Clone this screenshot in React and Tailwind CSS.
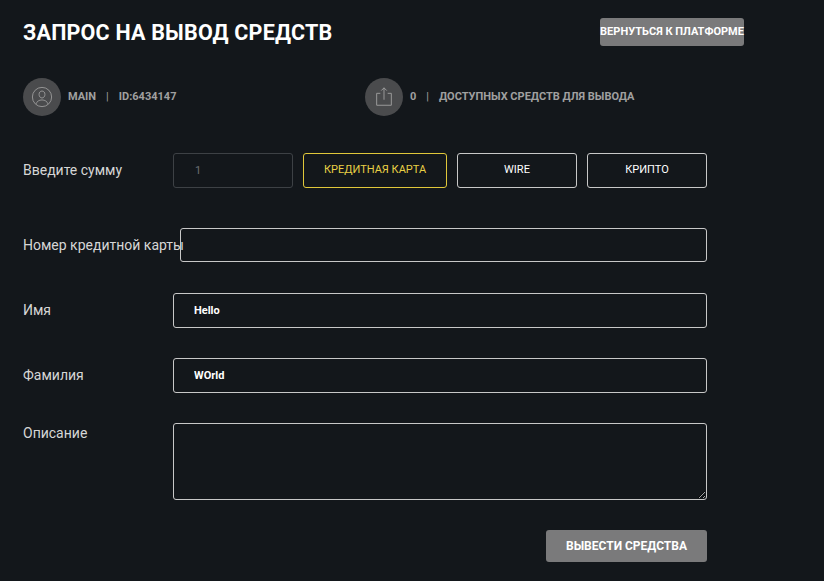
import React from 'react';

const Label = ({ children }) => <div className="w-[150px] shrink-0 text-[14px] text-[#d6d6d6]">{children}</div>;

const App = () => {
  return (
    <div className="min-h-[581px] bg-[#13171b] text-white px-[23px] pt-[18px]" style={{ fontFamily: 'Roboto, "Liberation Sans", sans-serif' }}>
      <div className="flex items-start justify-between pr-[57px]">
        <h1 className="text-[21.5px] leading-[28px] font-bold mt-[1px] tracking-[0.2px]">ЗАПРОС НА ВЫВОД СРЕДСТВ</h1>
        <button className="shrink-0 whitespace-nowrap h-[28px] w-[144px] rounded-[3px] bg-[#7a7a7b] text-[11px] font-bold text-white">ВЕРНУТЬСЯ К ПЛАТФОРМЕ</button>
      </div>

      <div className="mt-[31px] flex items-center text-[11px] font-bold text-[#a0a0a0]">
        <div className="flex items-center w-[342px]">
          <div className="w-[38px] h-[38px] rounded-full bg-[#4a4b4d] flex items-center justify-center">
            <svg width="22" height="22" viewBox="0 0 24 24" fill="none" stroke="#9a9a9a" strokeWidth="1">
              <circle cx="12" cy="12" r="10.5" />
              <path d="M12 5.5c-2 0-3.2 1.6-3.2 3.6 0 2.3 1.4 4 3.2 4s3.2-1.7 3.2-4c0-2-1.2-3.6-3.2-3.6z" />
              <path d="M5.5 19.5c.8-2.6 3.3-4.3 6.5-4.3s5.7 1.7 6.5 4.3" />
            </svg>
          </div>
          <span className="ml-[7px]">MAIN</span>
          <span className="mx-[10px] font-normal">|</span>
          <span>ID:6434147</span>
        </div>
        <div className="flex items-center">
          <div className="w-[38px] h-[38px] rounded-full bg-[#4a4b4d] flex items-center justify-center">
            <svg width="22" height="22" viewBox="0 0 24 24" fill="none" stroke="#a0a0a0" strokeWidth="1">
              <path d="M8 8H4v13h16V8h-4" />
              <path d="M12 15V2M9 5l3-3 3 3" />
            </svg>
          </div>
          <span className="ml-[7px]">0</span>
          <span className="mx-[10px] font-normal">|</span>
          <span>ДОСТУПНЫХ СРЕДСТВ ДЛЯ ВЫВОДА</span>
        </div>
      </div>

      <div className="mt-[37px] w-[684px] flex flex-col">
        <div className="flex items-center h-[35px]">
          <Label>Введите сумму</Label>
          <input defaultValue="1" className="w-[120px] h-[35px] rounded-[3px] border border-[#3d4145] bg-transparent px-[21px] text-[11px] text-[#6b6e72] outline-none" />
          <button className="ml-[10px] w-[144px] h-[35px] rounded-[3px] border border-[#e0c73a] text-[11px] text-[#e8cf45]">КРЕДИТНАЯ КАРТА</button>
          <button className="ml-[10px] w-[120px] h-[35px] rounded-[3px] border border-[#c8c8c8] text-[11px] text-white">WIRE</button>
          <button className="ml-[10px] w-[120px] h-[35px] rounded-[3px] border border-[#c8c8c8] text-[11px] text-white">КРИПТО</button>
        </div>

        <div className="flex items-center mt-[40px] h-[34px]">
          <div className="shrink-0 whitespace-nowrap text-[14px] text-[#d6d6d6] w-[157px]">Номер кредитной карты</div>
          <input className="flex-1 h-[34px] rounded-[3px] border border-[#c8c8c8] bg-transparent outline-none" />
        </div>

        <div className="flex items-center mt-[31px] h-[35px]">
          <Label>Имя</Label>
          <input defaultValue="Hello" className="flex-1 h-[35px] rounded-[3px] border border-[#c8c8c8] bg-transparent px-[20px] text-[11px] font-bold text-white outline-none" />
        </div>

        <div className="flex items-center mt-[30px] h-[35px]">
          <Label>Фамилия</Label>
          <input defaultValue="WOrld" className="flex-1 h-[35px] rounded-[3px] border border-[#c8c8c8] bg-transparent px-[20px] text-[11px] font-bold text-white outline-none" />
        </div>

        <div className="flex items-start mt-[30px]">
          <Label>Описание</Label>
          <textarea className="flex-1 h-[77px] rounded-[3px] border border-[#c8c8c8] bg-transparent outline-none" />
        </div>

        <div className="flex justify-end mt-[30px]">
          <button className="w-[161px] h-[32px] rounded-[3px] bg-[#7a7a7b] text-[12px] font-bold text-white">ВЫВЕСТИ СРЕДСТВА</button>
        </div>
      </div>
    </div>
  );
};

export default App;
